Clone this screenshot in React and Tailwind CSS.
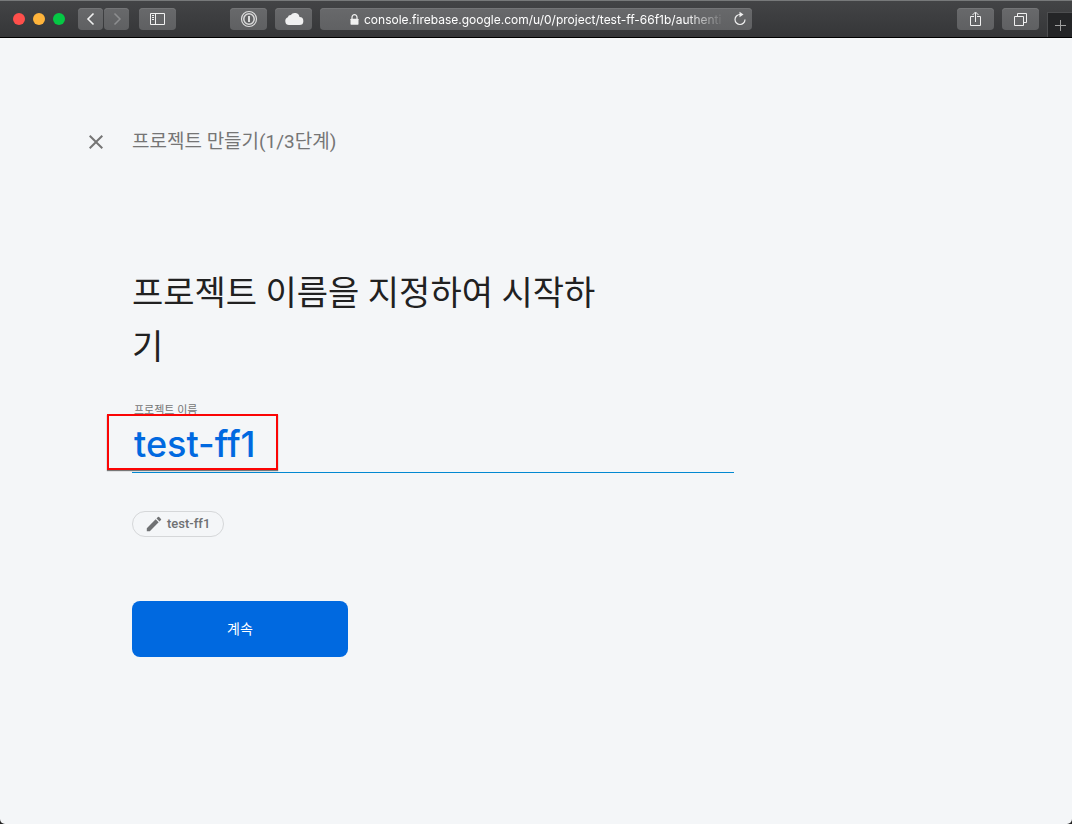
import React, { useState } from "react";

const toolButton =
  "flex h-[22px] items-center justify-center rounded bg-gradient-to-b from-[#68696b] to-[#5f6062] text-[#f0f0f0] shadow-[inset_0_1px_0_#747577]";

function Toolbar() {
  return (
    <header className="relative flex h-[38px] items-center border-t border-b border-t-[#77797a] border-b-black bg-gradient-to-b from-[#434446] to-[#353638] pr-[33px] pl-[13px]">
      <div className="flex gap-2">
        <button aria-label="닫기" className="size-3 rounded-full bg-[#ff4f4b]" />
        <button aria-label="최소화" className="size-3 rounded-full bg-[#ffb43b]" />
        <button aria-label="전체 화면" className="size-3 rounded-full bg-[#05c844]" />
      </div>

      <nav className="ml-[13px] flex gap-px">
        <button aria-label="뒤로" className={`${toolButton} w-[25px]`}>
          <svg width="10" height="14" viewBox="0 0 10 14" fill="none" stroke="currentColor" strokeWidth="1.6">
            <path d="M7.5 1.5 2 7l5.500 5.500" />
          </svg>
        </button>
        <button aria-label="앞으로" className={`${toolButton} w-[25px]`}>
          <svg width="10" height="14" viewBox="0 0 10 14" fill="none" stroke="#8d8e90" strokeWidth="1.5">
            <path d="M2.500 1.500 8 7l-5.500 5.500" />
          </svg>
        </button>
      </nav>

      <button aria-label="사이드바" className={`${toolButton} ml-[10px] w-[37px]`}>
        <svg width="15" height="12" viewBox="0 0 15 12" fill="none" stroke="currentColor">
          <path d="M.5.5h14v11H.5zM5.500.5v11M2 2.500h2M2 4.500h2M2 6.500h2" />
        </svg>
      </button>

      <button aria-label="1Password" className={`${toolButton} ml-[54px] w-[37px]`}>
        <svg width="18" height="18" viewBox="0 0 18 18" fill="none" stroke="#dcdcdc">
          <circle cx="9" cy="9" r="7.500" strokeWidth="1.200" />
          <circle cx="9" cy="9" r="5.200" strokeWidth="1.500" />
          <path d="M9 6v6" strokeWidth="2" />
        </svg>
      </button>
      <button aria-label="iCloud" className={`${toolButton} ml-2 w-[37px]`}>
        <svg width="20" height="14" viewBox="0 0 20 14" fill="currentColor">
          <path d="M5 13a4 4 0 0 1-1.200-7.700A3 3 0 0 1 6.800 3 4.800 4.800 0 0 1 15.500 5a4 4 0 0 1-.3 8z" />
        </svg>
      </button>

      <div className="ml-2 flex h-[22px] w-[432px] items-center rounded bg-gradient-to-b from-[#68696b] to-[#606163] pr-[5px] pl-[30px] text-[#f0f0f0] shadow-[inset_0_1px_0_#747577]">
        <svg className="shrink-0" width="9" height="11" viewBox="0 0 9 11" fill="none">
          <path d="M2 5V3.200a2.500 2.500 0 0 1 5 0V5" stroke="currentColor" strokeWidth="1.200" />
          <rect x=".5" y="4.700" width="8" height="6" rx=".6" fill="currentColor" />
        </svg>
        <span className="mt-px ml-[5px] min-w-0 flex-1 font-['Inter',sans-serif] text-[12px] leading-[18px] whitespace-nowrap text-white [mask-image:linear-gradient(to_right,black_88%,transparent_99%)]">
          console.firebase.google.com/u/0/project/test-ff-66f1b/authenti
        </span>
        <button aria-label="새로 고침" className="ml-1">
          <svg width="14" height="16" viewBox="0 0 14 16" fill="none">
            <path d="M7 3.500a5 5 0 1 0 5 5" stroke="currentColor" strokeWidth="1.200" />
            <path d="m6.500.8 4 2.700-4 2.800z" fill="currentColor" />
          </svg>
        </button>
      </div>

      <button aria-label="공유" className={`${toolButton} ml-auto w-[37px]`}>
        <svg width="11" height="16" viewBox="0 0 11 16" fill="none" stroke="currentColor">
          <path d="M4 5.500H.5v9h10v-9H7M5.500 11V1.500M2.500 4l3-3 3 3" />
        </svg>
      </button>
      <button aria-label="모든 탭" className={`${toolButton} ml-2 w-[37px]`}>
        <svg width="13" height="13" viewBox="0 0 13 13" fill="none" stroke="currentColor">
          <path d="M.5 3.500h9v9h-9zM3.500 3V.5h9v9H10" />
        </svg>
      </button>
      <button
        aria-label="새 탭"
        className="absolute right-0 bottom-0 flex h-[25px] w-[25px] items-center justify-center border-t border-l border-[#4d4e50] bg-[#242527] text-[#a0a0a0]"
      >
        <svg width="11" height="11" viewBox="0 0 11 11" stroke="currentColor">
          <path d="M5.500 0v11M0 5.500h11" />
        </svg>
      </button>
    </header>
  );
}

export default function App() {
  const [name, setName] = useState("test-ff1");
  return (
    <div className="flex min-h-screen flex-col bg-[#242424]">
      <Toolbar />
      <main className="flex-1 rounded-b-[5px] bg-[#f4f6f8] px-[84px] pt-[88px] pb-16 font-['Roboto','Noto_Sans_CJK_KR',sans-serif]">
        <div className="flex h-8 items-center gap-6 text-[#757575]">
          <button aria-label="취소" className="flex size-6 items-center justify-center">
            <svg width="24" height="24" viewBox="0 0 24 24" fill="currentColor">
              <path d="M19 6.410 17.590 5 12 10.590 6.410 5 5 6.410 10.590 12 5 17.590 6.410 19 12 13.410 17.590 19 19 17.590 13.410 12z" />
            </svg>
          </button>
          <p className="text-[19px] leading-8">프로젝트 만들기(1/3단계)</p>
        </div>

        <form className="ml-12 max-w-[602px]" onSubmit={(e) => e.preventDefault()}>
          <h1 className="mt-[108px] max-w-[480px] text-[34px] leading-[54px] font-normal text-[#212121]">
            프로젝트 이름을 지정하여 시작하기
          </h1>

          <div className="relative mt-7 border-b border-[#0288d1]">
            <label htmlFor="project-name" className="block pl-[2px] text-[11px] leading-[18px] text-[#757575]">
              프로젝트 이름
            </label>
            <input
              id="project-name"
              value={name}
              onChange={(e) => setName(e.target.value)}
              className="block h-[52px] w-full bg-transparent pb-[5px] pl-[2px] font-['Inter',sans-serif] text-[36px] font-medium text-[#0069e0] outline-none"
            />
            <div className="pointer-events-none absolute top-3 -left-[25px] h-[56px] w-[171px] border-2 border-[#fb0505] shadow-[0_1px_1px_#777]" />
          </div>

          <button
            type="button"
            className="mt-[38px] flex h-[26px] items-center gap-[5px] rounded-full border border-[#d5d7d9] px-[13px] text-[13px] font-medium text-[#6f7173]"
          >
            <svg width="16" height="16" viewBox="2 2 20 20" fill="currentColor">
              <path d="M3 17.250V21h3.750L17.810 9.940l-3.750-3.750zM20.710 7.040a1 1 0 0 0 0-1.410l-2.340-2.340a1 1 0 0 0-1.410 0l-1.830 1.830 3.750 3.750z" />
            </svg>
            {name}
          </button>

          <button
            type="submit"
            className="mt-16 h-14 w-[216px] rounded-lg bg-[#0069e0] text-[14px] font-normal text-white"
          >
            계속
          </button>
        </form>
      </main>
    </div>
  );
}
